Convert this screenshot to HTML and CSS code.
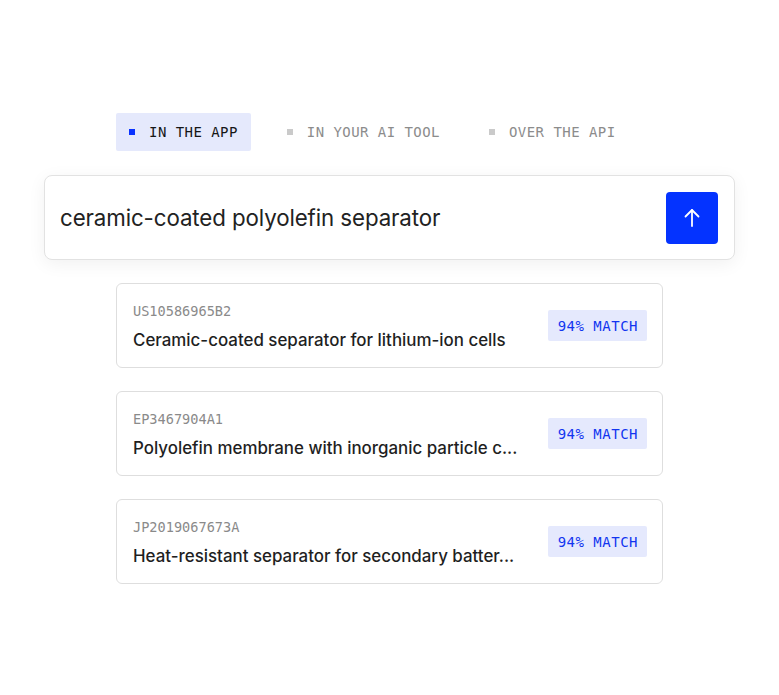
FILE: index.html
```html
<!DOCTYPE html>
<html lang="en">
<head>
<meta charset="utf-8">
<title>Search demo</title>
<link rel="stylesheet" href="styles.css">
</head>
<body>
<main class="stage">
  <nav class="tabs">
    <div class="tab tab-active"><span class="dot"></span><span class="tab-label">IN THE APP</span></div>
    <div class="tab"><span class="dot"></span><span class="tab-label">IN YOUR AI TOOL</span></div>
    <div class="tab"><span class="dot"></span><span class="tab-label">OVER THE API</span></div>
  </nav>
  <div class="search">
    <div class="query">ceramic-coated polyolefin separator</div>
    <button class="send" type="button" aria-label="Send">
      <svg width="20" height="20" viewBox="0 0 20 20" fill="none" stroke="#fff" stroke-width="1.8" stroke-linecap="round" stroke-linejoin="round"><path d="M10 18V2"/><path d="M3.5 8.5L10 2l6.5 6.5"/></svg>
    </button>
  </div>
  <section class="results">
    <article class="card">
      <div class="card-text">
        <div class="pid">US10586965B2</div>
        <div class="title">Ceramic-coated separator for lithium-ion cells</div>
      </div>
      <span class="badge">94% MATCH</span>
    </article>
    <article class="card">
      <div class="card-text">
        <div class="pid">EP3467904A1</div>
        <div class="title">Polyolefin membrane with inorganic particle c...</div>
      </div>
      <span class="badge">94% MATCH</span>
    </article>
    <article class="card">
      <div class="card-text">
        <div class="pid">JP2019067673A</div>
        <div class="title">Heat-resistant separator for secondary batter...</div>
      </div>
      <span class="badge">94% MATCH</span>
    </article>
  </section>
</main>
</body>
</html>
```

FILE: styles.css
```css
* { box-sizing: border-box; }
html, body { margin: 0; padding: 0; background: #ffffff; }
body { font-family: Inter, "Noto Sans", sans-serif; color: #1f1f1f; }

.stage {
  width: 691px;
  margin: 0 0 0 44px;
  padding-top: 113px;
  display: flex;
  flex-direction: column;
}

.tabs {
  display: flex;
  gap: 23px;
  margin-left: 72px;
  height: 38px;
}
.tab {
  display: flex;
  align-items: center;
  gap: 14px;
  padding: 0 13px;
  border-radius: 2px;
  font-family: "DejaVu Sans Mono", "Liberation Mono", monospace;
  font-size: 14px;
  letter-spacing: 0.45px;
  color: #8c8c8c;
}
.tab-active { background: #e5e9fc; color: #161616; }
.dot { width: 6px; height: 6px; background: #cacaca; flex: none; }
.tab-active .dot { background: #0a33ff; }

.search {
  margin-top: 24px;
  height: 85px;
  border: 1px solid #e2e2e2;
  border-radius: 8px;
  background: #fff;
  box-shadow: 0 4px 18px rgba(0, 0, 0, 0.06);
  display: flex;
  align-items: center;
  justify-content: space-between;
  padding: 0 16px 0 15px;
}
.query { font-size: 22.3px; color: #222; letter-spacing: -0.1px; }
.send {
  width: 52px;
  height: 52px;
  border: 0;
  border-radius: 4px;
  background: #0433ff;
  display: flex;
  align-items: center;
  justify-content: center;
  padding: 0;
}

.results {
  margin: 23px 0 0 72px;
  width: 547px;
  display: flex;
  flex-direction: column;
  gap: 23px;
}
.card {
  height: 85px;
  border: 1px solid #dedede;
  border-radius: 6px;
  background: #fff;
  padding: 0 15px 0 16px;
  display: flex;
  align-items: center;
  justify-content: space-between;
}
.card-text { display: flex; flex-direction: column; padding-top: 1px; }
.pid {
  font-family: "DejaVu Sans Mono", "Liberation Mono", monospace;
  font-size: 13.6px;
  line-height: 22px;
  color: #8a8a8a;
}
.title {
  margin-top: 6px;
  font-size: 16.9px;
  line-height: 24px;
  font-weight: 500;
  color: #1f1f1f;
}
.badge {
  height: 31px;
  display: flex;
  align-items: center;
  padding: 0 9px 0 10px;
  background: #e5e9fd;
  border-radius: 2px;
  font-family: "DejaVu Sans Mono", "Liberation Mono", monospace;
  font-size: 14px;
  letter-spacing: 0.5px;
  color: #1235f0;
}
```
